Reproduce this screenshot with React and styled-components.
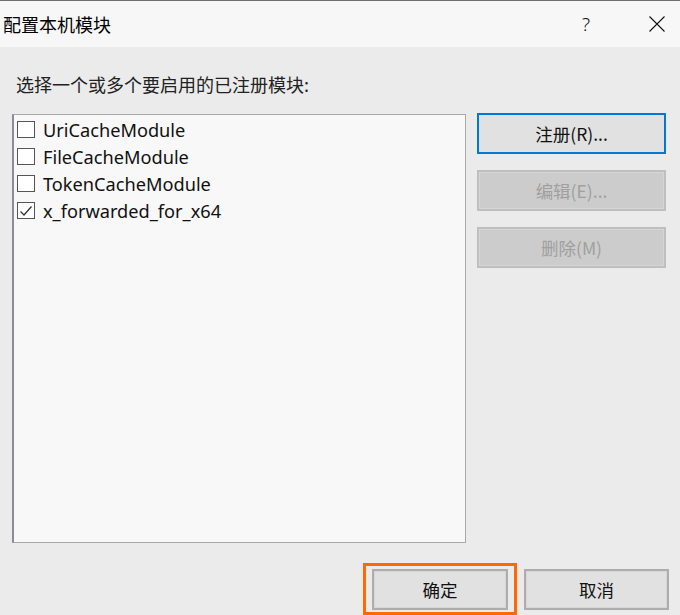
import React from "react";
import styled, { createGlobalStyle } from "styled-components";

const Global = createGlobalStyle`
  html, body { margin: 0; padding: 0; background: #ebebeb; }
  body { font-family: "Noto Sans", "Noto Sans CJK SC", sans-serif; overflow: hidden; }
`;

const Window = styled.div`
  width: 680px;
  height: 615px;
  display: flex;
  flex-direction: column;
  background: #ebebeb;
  border-top: 1px solid #707070;
  box-sizing: border-box;
  overflow: hidden;
`;

const TitleBar = styled.div`
  height: 46px;
  flex: none;
  background: #f7f7f7;
  display: flex;
  align-items: center;
  padding-left: 3px;
  padding-right: 15px;
`;

const Title = styled.div`
  flex: 1;
  font-family: "Noto Sans CJK SC", sans-serif;
  font-size: 18px;
  color: #000;
  line-height: 24px;
`;

const TitleIcon = styled.div`
  width: ${(p) => p.w}px;
  margin-left: ${(p) => p.ml || 0}px;
  display: flex;
  align-items: center;
  justify-content: center;
  font-family: "Noto Sans", sans-serif;
  font-size: 19px;
  font-weight: 300;
  color: #111;
`;

const Body = styled.div`
  flex: 1;
  display: flex;
  flex-direction: column;
  padding: 25px 14px 0 12px;
`;

const Label = styled.div`
  font-family: "Noto Sans CJK SC", sans-serif;
  font-size: 18px;
  line-height: 24px;
  color: #222;
  padding-left: 4px;
`;

const Main = styled.div`
  margin-top: 18px;
  display: grid;
  grid-template-columns: 454px 1fr;
  column-gap: 11px;
  align-items: start;
`;

const ListBox = styled.div`
  height: 429px;
  box-sizing: border-box;
  background: #f8f8f8;
  border: 1px solid #a8a8a8;
  border-left: 2px solid #8a8d96;
  padding: 1px 0 0 3px;
  display: flex;
  flex-direction: column;
`;

const Item = styled.label`
  height: 27px;
  display: flex;
  align-items: center;
  gap: 8px;
  font-family: "Noto Sans", "Noto Sans CJK SC", sans-serif;
  font-size: 18.2px;
  color: #111;
`;

const Box = styled.span`
  width: 16px;
  height: 15px;
  border: 1.5px solid #555;
  background: #fff;
  display: flex;
  align-items: center;
  justify-content: center;
  flex: none;
`;

const Buttons = styled.div`
  display: flex;
  flex-direction: column;
  gap: 16px;
  margin-top: -1px;
`;

const Btn = styled.div`
  height: 41px;
  width: ${(p) => p.w || 189}px;
  box-sizing: border-box;
  display: flex;
  align-items: center;
  justify-content: center;
  font-family: "Noto Sans CJK SC", sans-serif;
  font-size: 17.5px;
  background: ${(p) => (p.disabled ? "#cccccc" : "#e1e1e1")};
  color: ${(p) => (p.disabled ? "#a0a0a0" : "#111")};
  border: 2px solid ${(p) => (p.focused ? "#0078d7" : p.disabled ? "#bfbfbf" : "#adadad")};
  box-shadow: ${(p) => (p.focused ? "none" : "inset 0 0 0 1px #d6d6d6")};
`;

const Footer = styled.div`
  margin-top: auto;
  display: flex;
  justify-content: flex-end;
  align-items: flex-start;
  gap: 7px;
  margin-right: -3px;
`;

const Highlight = styled.div`
  border: 3px solid #ff6a00;
  padding: 3px 6px 2px 6px;
  display: flex;
`;

const CancelSlot = styled.div`
  padding-top: 6px;
  display: flex;
`;

const Check = () => (
  <svg width="14" height="12" viewBox="0 0 14 12">
    <path d="M1.5 6.5 L5 10 L12.5 1.5" fill="none" stroke="#333" strokeWidth="1.3" />
  </svg>
);

const CloseIcon = () => (
  <svg width="16" height="16" viewBox="0 0 16 16">
    <path d="M0.5 0.5 L15.5 15.5 M15.5 0.5 L0.5 15.5" stroke="#111" strokeWidth="1.1" />
  </svg>
);

const items = [
  { name: "UriCacheModule", checked: false },
  { name: "FileCacheModule", checked: false },
  { name: "TokenCacheModule", checked: false },
  { name: "x_forwarded_for_x64", checked: true },
];

export default function App() {
  return (
    <>
      <Global />
      <Window>
        <TitleBar>
          <Title>配置本机模块</Title>
          <TitleIcon w={14}>?</TitleIcon>
          <TitleIcon w={16} ml={56}>
            <CloseIcon />
          </TitleIcon>
        </TitleBar>
        <Body>
          <Label>选择一个或多个要启用的已注册模块:</Label>
          <Main>
            <ListBox>
              {items.map((it) => (
                <Item key={it.name}>
                  <Box>{it.checked && <Check />}</Box>
                  {it.name}
                </Item>
              ))}
            </ListBox>
            <Buttons>
              <Btn focused>注册(R)...</Btn>
              <Btn disabled>编辑(E)...</Btn>
              <Btn disabled>删除(M)</Btn>
            </Buttons>
          </Main>
          <Footer>
            <Highlight>
              <Btn w={136}>确定</Btn>
            </Highlight>
            <CancelSlot>
              <Btn w={145}>取消</Btn>
            </CancelSlot>
          </Footer>
        </Body>
      </Window>
    </>
  );
}
